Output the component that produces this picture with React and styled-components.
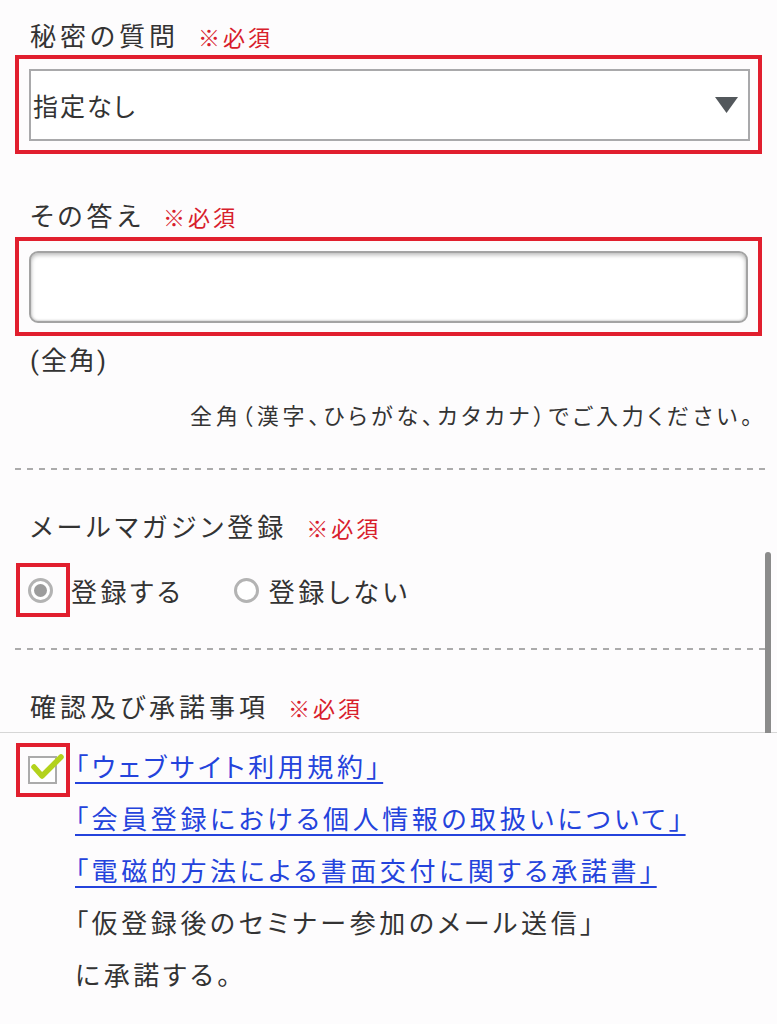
import React from "react";
import styled, { createGlobalStyle } from "styled-components";

const Global = createGlobalStyle`
  html, body { margin: 0; padding: 0; background: #fdfcfd; }
  body {
    font-family: Roboto, "Noto Sans CJK JP", "Noto Sans", sans-serif;
    font-feature-settings: "palt";
    color: #333;
  }
`;

const Page = styled.div`
  position: relative;
  width: 777px;
  height: 1024px;
  overflow: hidden;
  box-sizing: border-box;
  padding-top: 19px;
`;

const Section = styled.div`
  padding: 0 15px;
  margin-top: ${(p) => p.$mt || 0}px;
`;

const Label = styled.div`
  display: flex;
  align-items: baseline;
  padding-left: 15px;
  height: 36px;
  line-height: 36px;
  font-size: 26px;
  letter-spacing: 4px;
  color: #333;
  margin-bottom: ${(p) => p.$mb || 0}px;
`;

const Req = styled.span`
  margin-left: 19px;
  font-size: 22px;
  letter-spacing: 3px;
  color: #d8202c;
`;

const Highlight = styled.div`
  border: 4px solid #e11f2e;
  padding: 10px 8px 9px 10px;
`;

const SelectBox = styled.div`
  display: flex;
  align-items: center;
  justify-content: space-between;
  box-sizing: border-box;
  height: 72px;
  border: 2px solid #a9a9ab;
  background: #fff;
  padding: 0 10px 0 2px;
  font-size: 25px;
  letter-spacing: 2px;
  color: #333;
`;

const Caret = styled.svg`
  width: 23px;
  height: 16px;
  flex: none;
`;

const TextInput = styled.div`
  box-sizing: border-box;
  height: 72px;
  margin-right: 2px;
  border: 2px solid #a3a3a3;
  border-radius: 9px;
  background: #fff;
  box-shadow: inset 0 2px 4px rgba(0, 0, 0, 0.28), inset 0 -1px 2px rgba(0, 0, 0, 0.12);
`;

const Plain = styled.div`
  padding-left: 15px;
  height: 36px;
  line-height: 36px;
  font-size: 26px;
  letter-spacing: 2px;
  margin-top: ${(p) => p.$mt || 0}px;
`;

const Note = styled.div`
  text-align: right;
  padding-right: 6px;
  height: 36px;
  line-height: 36px;
  font-size: 22px;
  letter-spacing: 3.9px;
  margin-top: 20px;
`;

const Dashed = styled.div`
  margin: ${(p) => p.$mt || 0}px 11px 0 15px;
  height: 2px;
  background: repeating-linear-gradient(
    to right,
    #ababab 0 6px,
    transparent 6px 12px
  );
`;

const RadioRow = styled.div`
  display: flex;
  align-items: center;
  margin-top: 17px;
  margin-left: 1px;
`;

const MarkBox = styled.div`
  box-sizing: border-box;
  width: 54px;
  height: 54px;
  border: 4px solid #e11f2e;
  display: flex;
  align-items: center;
  padding-left: 8px;
  flex: none;
`;

const RadioCircle = styled.span`
  box-sizing: border-box;
  width: 25px;
  height: 25px;
  border-radius: 50%;
  border: 3px solid #b3b3b3;
  display: flex;
  align-items: center;
  justify-content: center;
  flex: none;
  background: #fff;
  margin-left: ${(p) => p.$ml || 0}px;
  &::after {
    content: "";
    display: ${(p) => (p.$on ? "block" : "none")};
    width: 13px;
    height: 13px;
    border-radius: 50%;
    background: #9c9c9c;
  }
`;

const OptionText = styled.span`
  font-size: 26px;
  letter-spacing: 3.5px;
  color: #333;
  margin-left: ${(p) => p.$ml || 0}px;
`;

const Separator = styled.div`
  margin-top: 6px;
  height: 1px;
  background: #d6d6d6;
`;

const AgreeRow = styled.div`
  display: flex;
  align-items: flex-start;
  padding-left: 16px;
  margin-top: 10px;
`;

const CheckWrap = styled(MarkBox)`
  position: relative;
`;

const CheckSquare = styled.span`
  box-sizing: border-box;
  width: 29px;
  height: 28px;
  border: 2px solid #ababab;
  background: #fff;
  position: relative;
  display: block;
`;

const CheckIcon = styled.svg`
  position: absolute;
  left: 1px;
  top: -4px;
  width: 34px;
  height: 28px;
  overflow: visible;
`;

const Lines = styled.div`
  display: flex;
  flex-direction: column;
  margin-left: 5px;
  margin-top: -1px;
`;

const Line = styled.div`
  height: 52px;
  line-height: 52px;
  font-size: 26px;
  letter-spacing: 3.6px;
  white-space: nowrap;
  color: #333;
`;

const Link = styled.a`
  color: #2443dc;
  text-decoration: underline;
  text-decoration-thickness: 2px;
  text-underline-offset: 5px;
  cursor: pointer;
`;

const Scrollbar = styled.div`
  position: absolute;
  left: 765px;
  top: 552px;
  width: 6px;
  height: 181px;
  background: #8b8b8b;
  border-radius: 3px 3px 0 0;
`;

export default function App() {
  return (
    <Page>
      <Global />
      <Section>
        <Label>
          秘密の質問<Req>※必須</Req>
        </Label>
        <Highlight>
          <SelectBox>
            <span>指定なし</span>
            <Caret viewBox="0 0 23 16">
              <path d="M0 0 H23 L11.5 16 Z" fill="#53585c" />
            </Caret>
          </SelectBox>
        </Highlight>
      </Section>

      <Section $mt={45}>
        <Label $mb={2}>
          その答え<Req>※必須</Req>
        </Label>
        <Highlight>
          <TextInput />
        </Highlight>
        <Plain $mt={7}>(全角)</Plain>
        <Note>全角（漢字、ひらがな、カタカナ）でご入力ください。</Note>
      </Section>

      <Dashed $mt={33} />

      <Section $mt={40}>
        <Label>
          メールマガジン登録<Req>※必須</Req>
        </Label>
        <RadioRow>
          <MarkBox>
            <RadioCircle $on />
          </MarkBox>
          <OptionText $ml={1}>登録する</OptionText>
          <RadioCircle $ml={50} />
          <OptionText $ml={10}>登録しない</OptionText>
        </RadioRow>
      </Section>

      <Dashed $mt={31} />

      <Section $mt={40}>
        <Label>
          確認及び承諾事項<Req>※必須</Req>
        </Label>
      </Section>

      <Separator />

      <AgreeRow>
        <CheckWrap>
          <CheckSquare>
            <CheckIcon viewBox="0 0 34 28">
              <path
                d="M3 13 L11 22 L30 3"
                fill="none"
                stroke="#b3d21c"
                strokeWidth="5.5"
                strokeLinecap="round"
                strokeLinejoin="round"
              />
            </CheckIcon>
          </CheckSquare>
        </CheckWrap>
        <Lines>
          <Line>
            <Link>「ウェブサイト利用規約」</Link>
          </Line>
          <Line>
            <Link>「会員登録における個人情報の取扱いについて」</Link>
          </Line>
          <Line>
            <Link>「電磁的方法による書面交付に関する承諾書」</Link>
          </Line>
          <Line>「仮登録後のセミナー参加のメール送信」</Line>
          <Line>に承諾する。</Line>
        </Lines>
      </AgreeRow>

      <Scrollbar />
    </Page>
  );
}
